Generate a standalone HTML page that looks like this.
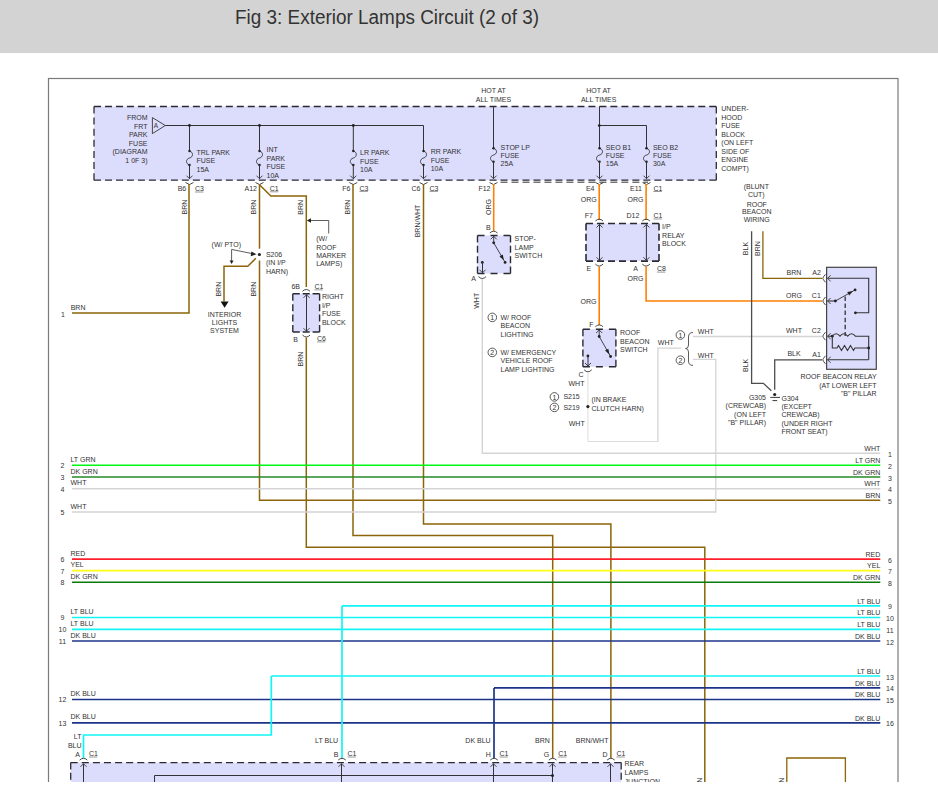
<!DOCTYPE html><html><head><meta charset="utf-8"><style>html,body{margin:0;padding:0;background:#fff;width:938px;height:791px;overflow:hidden}svg{display:block;font-family:"Liberation Sans",sans-serif}</style></head><body>
<svg width="938" height="791" viewBox="0 0 938 791">
<rect x="0" y="0" width="938" height="791" fill="#fff"/>
<rect x="0" y="0" width="938" height="53" fill="#d3d3d3"/>
<text x="235" y="23.9" font-size="19.5" fill="#333" textLength="304" lengthAdjust="spacingAndGlyphs">Fig 3: Exterior Lamps Circuit (2 of 3)</text>
<rect x="48.5" y="78.5" width="849.5" height="760" fill="none" stroke="#7a7a7a" stroke-width="1.2"/>
<rect x="94" y="106.5" width="622.3" height="73.69999999999999" fill="#dcdcfc"/>
<line x1="94" y1="106.5" x2="716.3" y2="106.5" stroke="#2a2a33" stroke-width="1.3" stroke-dasharray="7.0 3.987"/>
<line x1="94" y1="106.5" x2="94" y2="180.2" stroke="#2a2a33" stroke-width="1.3" stroke-dasharray="7.0 4.117"/>
<line x1="716.3" y1="106.5" x2="716.3" y2="180.2" stroke="#2a2a33" stroke-width="1.3" stroke-dasharray="7.0 4.117"/>
<line x1="94" y1="180.2" x2="716.3" y2="180.2" stroke="#2a2a33" stroke-width="1.3" stroke-dasharray="7.0 3.987"/>
<clipPath id="dbl"><rect x="498" y="175" width="150" height="12"/></clipPath>
<line x1="94" y1="182.2" x2="716.3" y2="182.2" stroke="#333333" stroke-width="1.0" stroke-dasharray="7 3.987" clip-path="url(#dbl)"/>
<path d="M152.4,117.6 L165.3,125.5 L152.4,133.6 Z" fill="#dcdcfc" stroke="#333333" stroke-width="0.9"/>
<text x="156" y="128.02" text-anchor="middle" font-size="6.5" fill="#333333" >A</text>
<text x="147.5" y="120.10" text-anchor="end" font-size="7" fill="#333333" >FROM</text>
<text x="147.5" y="128.70" text-anchor="end" font-size="7" fill="#333333" >FRT</text>
<text x="147.5" y="137.10" text-anchor="end" font-size="7" fill="#333333" >PARK</text>
<text x="147.5" y="145.90" text-anchor="end" font-size="7" fill="#333333" >FUSE</text>
<text x="147.5" y="154.40" text-anchor="end" font-size="7" fill="#333333" >(DIAGRAM</text>
<text x="147.5" y="163.00" text-anchor="end" font-size="7" fill="#333333" >1 0F 3)</text>
<polyline points="165.3,125.5 423.5,125.5 423.5,151" fill="none" stroke="#333333" stroke-width="1.0" stroke-linejoin="miter"/>
<polyline points="189.5,125.5 189.5,151" fill="none" stroke="#333333" stroke-width="1.0" stroke-linejoin="miter"/>
<circle cx="189.5" cy="125.5" r="1.4" fill="#222"/>
<polyline points="259.5,125.5 259.5,151" fill="none" stroke="#333333" stroke-width="1.0" stroke-linejoin="miter"/>
<circle cx="259.5" cy="125.5" r="1.4" fill="#222"/>
<polyline points="353.3,125.5 353.3,151" fill="none" stroke="#333333" stroke-width="1.0" stroke-linejoin="miter"/>
<circle cx="353.3" cy="125.5" r="1.4" fill="#222"/>
<path d="M189.5,151 C193.5,152 193.5,157.0 189.5,158.0 C185.5,159.0 185.5,164 189.5,165" fill="none" stroke="#333333" stroke-width="0.9"/>
<circle cx="189.5" cy="151" r="1.25" fill="#222"/>
<circle cx="189.5" cy="165" r="1.25" fill="#222"/>
<polyline points="189.5,165 189.5,178.7" fill="none" stroke="#333333" stroke-width="1.0" stroke-linejoin="miter"/>
<path d="M186.5,175.7 L189.5,178.7 L192.5,175.7" fill="none" stroke="#333333" stroke-width="0.9"/>
<path d="M185.5,182.5 L189.5,184.5 L193.5,182.5" fill="none" stroke="#333333" stroke-width="0.9"/>
<path d="M259.5,151 C263.5,152 263.5,157.0 259.5,158.0 C255.5,159.0 255.5,164 259.5,165" fill="none" stroke="#333333" stroke-width="0.9"/>
<circle cx="259.5" cy="151" r="1.25" fill="#222"/>
<circle cx="259.5" cy="165" r="1.25" fill="#222"/>
<polyline points="259.5,165 259.5,178.7" fill="none" stroke="#333333" stroke-width="1.0" stroke-linejoin="miter"/>
<path d="M256.5,175.7 L259.5,178.7 L262.5,175.7" fill="none" stroke="#333333" stroke-width="0.9"/>
<path d="M255.5,182.5 L259.5,184.5 L263.5,182.5" fill="none" stroke="#333333" stroke-width="0.9"/>
<path d="M353.3,151 C357.3,152 357.3,157.0 353.3,158.0 C349.3,159.0 349.3,164 353.3,165" fill="none" stroke="#333333" stroke-width="0.9"/>
<circle cx="353.3" cy="151" r="1.25" fill="#222"/>
<circle cx="353.3" cy="165" r="1.25" fill="#222"/>
<polyline points="353.3,165 353.3,178.7" fill="none" stroke="#333333" stroke-width="1.0" stroke-linejoin="miter"/>
<path d="M350.3,175.7 L353.3,178.7 L356.3,175.7" fill="none" stroke="#333333" stroke-width="0.9"/>
<path d="M349.3,182.5 L353.3,184.5 L357.3,182.5" fill="none" stroke="#333333" stroke-width="0.9"/>
<path d="M423.5,151 C427.5,152 427.5,157.0 423.5,158.0 C419.5,159.0 419.5,164 423.5,165" fill="none" stroke="#333333" stroke-width="0.9"/>
<circle cx="423.5" cy="151" r="1.25" fill="#222"/>
<circle cx="423.5" cy="165" r="1.25" fill="#222"/>
<polyline points="423.5,165 423.5,178.7" fill="none" stroke="#333333" stroke-width="1.0" stroke-linejoin="miter"/>
<path d="M420.5,175.7 L423.5,178.7 L426.5,175.7" fill="none" stroke="#333333" stroke-width="0.9"/>
<path d="M419.5,182.5 L423.5,184.5 L427.5,182.5" fill="none" stroke="#333333" stroke-width="0.9"/>
<text x="196.5" y="154.50" text-anchor="start" font-size="7" fill="#333333" >TRL PARK</text>
<text x="196.5" y="163.00" text-anchor="start" font-size="7" fill="#333333" >FUSE</text>
<text x="196.5" y="171.50" text-anchor="start" font-size="7" fill="#333333" >15A</text>
<text x="266.5" y="152.20" text-anchor="start" font-size="7" fill="#333333" >INT</text>
<text x="266.5" y="160.80" text-anchor="start" font-size="7" fill="#333333" >PARK</text>
<text x="266.5" y="169.30" text-anchor="start" font-size="7" fill="#333333" >FUSE</text>
<text x="266.5" y="178.00" text-anchor="start" font-size="7" fill="#333333" >10A</text>
<text x="360" y="155.30" text-anchor="start" font-size="7" fill="#333333" >LR PARK</text>
<text x="360" y="163.70" text-anchor="start" font-size="7" fill="#333333" >FUSE</text>
<text x="360" y="172.10" text-anchor="start" font-size="7" fill="#333333" >10A</text>
<text x="430.7" y="154.00" text-anchor="start" font-size="7" fill="#333333" >RR PARK</text>
<text x="430.7" y="162.50" text-anchor="start" font-size="7" fill="#333333" >FUSE</text>
<text x="430.7" y="171.10" text-anchor="start" font-size="7" fill="#333333" >10A</text>
<text x="493.5" y="93.20" text-anchor="middle" font-size="7" fill="#333333" >HOT AT</text>
<text x="493.5" y="102.10" text-anchor="middle" font-size="7" fill="#333333" >ALL TIMES</text>
<text x="598.6" y="93.20" text-anchor="middle" font-size="7" fill="#333333" >HOT AT</text>
<text x="598.6" y="102.10" text-anchor="middle" font-size="7" fill="#333333" >ALL TIMES</text>
<polyline points="493.5,106.5 493.5,148.3" fill="none" stroke="#333333" stroke-width="1.0" stroke-linejoin="miter"/>
<path d="M493.5,148.3 C497.5,149.3 497.5,154.05 493.5,155.05 C489.5,156.05 489.5,160.8 493.5,161.8" fill="none" stroke="#333333" stroke-width="0.9"/>
<circle cx="493.5" cy="148.3" r="1.25" fill="#222"/>
<circle cx="493.5" cy="161.8" r="1.25" fill="#222"/>
<polyline points="493.5,161.8 493.5,178.7" fill="none" stroke="#333333" stroke-width="1.0" stroke-linejoin="miter"/>
<path d="M490.5,175.7 L493.5,178.7 L496.5,175.7" fill="none" stroke="#333333" stroke-width="0.9"/>
<path d="M489.5,182.5 L493.5,184.5 L497.5,182.5" fill="none" stroke="#333333" stroke-width="0.9"/>
<polyline points="599.5,106.5 599.5,148.3" fill="none" stroke="#333333" stroke-width="1.0" stroke-linejoin="miter"/>
<polyline points="599.5,125.5 646.5,125.5 646.5,148.3" fill="none" stroke="#333333" stroke-width="1.0" stroke-linejoin="miter"/>
<circle cx="599.3" cy="125.6" r="1.4" fill="#222"/>
<path d="M599.5,148.3 C603.5,149.3 603.5,154.05 599.5,155.05 C595.5,156.05 595.5,160.8 599.5,161.8" fill="none" stroke="#333333" stroke-width="0.9"/>
<circle cx="599.5" cy="148.3" r="1.25" fill="#222"/>
<circle cx="599.5" cy="161.8" r="1.25" fill="#222"/>
<polyline points="599.5,161.8 599.5,178.7" fill="none" stroke="#333333" stroke-width="1.0" stroke-linejoin="miter"/>
<path d="M596.5,175.7 L599.5,178.7 L602.5,175.7" fill="none" stroke="#333333" stroke-width="0.9"/>
<path d="M595.5,182.5 L599.5,184.5 L603.5,182.5" fill="none" stroke="#333333" stroke-width="0.9"/>
<path d="M646.5,148.3 C650.5,149.3 650.5,154.05 646.5,155.05 C642.5,156.05 642.5,160.8 646.5,161.8" fill="none" stroke="#333333" stroke-width="0.9"/>
<circle cx="646.5" cy="148.3" r="1.25" fill="#222"/>
<circle cx="646.5" cy="161.8" r="1.25" fill="#222"/>
<polyline points="646.5,161.8 646.5,178.7" fill="none" stroke="#333333" stroke-width="1.0" stroke-linejoin="miter"/>
<path d="M643.5,175.7 L646.5,178.7 L649.5,175.7" fill="none" stroke="#333333" stroke-width="0.9"/>
<path d="M642.5,182.5 L646.5,184.5 L650.5,182.5" fill="none" stroke="#333333" stroke-width="0.9"/>
<text x="500.6" y="149.50" text-anchor="start" font-size="7" fill="#333333" >STOP LP</text>
<text x="500.6" y="157.50" text-anchor="start" font-size="7" fill="#333333" >FUSE</text>
<text x="500.6" y="166.10" text-anchor="start" font-size="7" fill="#333333" >25A</text>
<text x="605.8" y="149.50" text-anchor="start" font-size="7" fill="#333333" >SEO B1</text>
<text x="605.8" y="157.50" text-anchor="start" font-size="7" fill="#333333" >FUSE</text>
<text x="605.8" y="166.10" text-anchor="start" font-size="7" fill="#333333" >15A</text>
<text x="652.9" y="149.50" text-anchor="start" font-size="7" fill="#333333" >SEO B2</text>
<text x="652.9" y="157.50" text-anchor="start" font-size="7" fill="#333333" >FUSE</text>
<text x="652.9" y="166.10" text-anchor="start" font-size="7" fill="#333333" >30A</text>
<text x="721.3" y="111.40" text-anchor="start" font-size="7" fill="#333333" >UNDER-</text>
<text x="721.3" y="119.80" text-anchor="start" font-size="7" fill="#333333" >HOOD</text>
<text x="721.3" y="128.20" text-anchor="start" font-size="7" fill="#333333" >FUSE</text>
<text x="721.3" y="136.60" text-anchor="start" font-size="7" fill="#333333" >BLOCK</text>
<text x="721.3" y="145.00" text-anchor="start" font-size="7" fill="#333333" >(ON LEFT</text>
<text x="721.3" y="153.70" text-anchor="start" font-size="7" fill="#333333" >SIDE OF</text>
<text x="721.3" y="162.20" text-anchor="start" font-size="7" fill="#333333" >ENGINE</text>
<text x="721.3" y="170.80" text-anchor="start" font-size="7" fill="#333333" >COMPT)</text>
<text x="186.2" y="191.10" text-anchor="end" font-size="7" fill="#333333" >B6</text>
<text x="195" y="191.10" text-anchor="start" font-size="7" fill="#333333" >C3</text>
<line x1="195" y1="192.00" x2="203.40" y2="192.00" stroke="#555" stroke-width="0.6"/>
<text x="257" y="191.10" text-anchor="end" font-size="7" fill="#333333" >A12</text>
<text x="269.8" y="190.90" text-anchor="start" font-size="7" fill="#333333" >C1</text>
<line x1="269.8" y1="191.80" x2="278.20" y2="191.80" stroke="#555" stroke-width="0.6"/>
<text x="350.5" y="191.10" text-anchor="end" font-size="7" fill="#333333" >F6</text>
<text x="359.4" y="190.50" text-anchor="start" font-size="7" fill="#333333" >C3</text>
<line x1="359.4" y1="191.40" x2="367.80" y2="191.40" stroke="#555" stroke-width="0.6"/>
<text x="420.5" y="191.10" text-anchor="end" font-size="7" fill="#333333" >C6</text>
<text x="429.5" y="190.50" text-anchor="start" font-size="7" fill="#333333" >C3</text>
<line x1="429.5" y1="191.40" x2="437.90" y2="191.40" stroke="#555" stroke-width="0.6"/>
<text x="490.5" y="191.10" text-anchor="end" font-size="7" fill="#333333" >F12</text>
<text x="590.2" y="190.60" text-anchor="middle" font-size="7" fill="#333333" >E4</text>
<text x="636" y="190.60" text-anchor="middle" font-size="7" fill="#333333" >E11</text>
<text x="653.4" y="190.60" text-anchor="start" font-size="7" fill="#333333" >C1</text>
<line x1="653.4" y1="191.50" x2="661.80" y2="191.50" stroke="#555" stroke-width="0.6"/>
<text x="588.8" y="202.00" text-anchor="middle" font-size="7" fill="#333333" >ORG</text>
<text x="635.6" y="202.00" text-anchor="middle" font-size="7" fill="#333333" >ORG</text>
<polyline points="189,184 189,313 72,313" fill="none" stroke="#8b6508" stroke-width="1.5" stroke-linejoin="miter"/>
<text x="186.50" y="207" text-anchor="middle" font-size="7" fill="#333333" transform="rotate(-90 186.50 207)">BRN</text>
<text x="70.7" y="310.20" text-anchor="start" font-size="7" fill="#333333" >BRN</text>
<text x="63" y="316.50" text-anchor="middle" font-size="7" fill="#333333" >1</text>
<polyline points="259.5,184 259.5,248.7" fill="none" stroke="#8b6508" stroke-width="1.5" stroke-linejoin="miter"/>
<polyline points="259.5,260.4 259.5,500.3 880.3,500.3" fill="none" stroke="#8b6508" stroke-width="1.5" stroke-linejoin="miter"/>
<polyline points="259.5,184.7 270.9,196 306.3,196 306.3,287" fill="none" stroke="#8b6508" stroke-width="1.5" stroke-linejoin="miter"/>
<text x="256.30" y="207" text-anchor="middle" font-size="7" fill="#333333" transform="rotate(-90 256.30 207)">BRN</text>
<text x="302.80" y="207.3" text-anchor="middle" font-size="7" fill="#333333" transform="rotate(-90 302.80 207.3)">BRN</text>
<circle cx="259.4" cy="254.5" r="1.6" fill="#222"/>
<polyline points="255.8,258.3 247.8,266.2 224,266.2 224,301.5" fill="none" stroke="#8b6508" stroke-width="1.5" stroke-linejoin="miter"/>
<path d="M220.6,301.4 L228.6,301.4 L224.6,307.8 Z" fill="#111"/>
<polyline points="253.5,253.9 231.6,249.4 231.6,261" fill="none" stroke="#333333" stroke-width="0.8"/>
<path d="M256.5,254.3 L251.4,251.6 L250.7,256.2 Z" fill="#222"/>
<path d="M229.6,260.5 L233.6,260.5 L231.6,264 Z" fill="#222"/>
<text x="226.3" y="247.40" text-anchor="middle" font-size="7" fill="#333333" >(W/ PTO)</text>
<text x="265.9" y="257.20" text-anchor="start" font-size="7" fill="#333333" >S206</text>
<text x="265.9" y="265.40" text-anchor="start" font-size="7" fill="#333333" >(IN I/P</text>
<text x="265.9" y="273.90" text-anchor="start" font-size="7" fill="#333333" >HARN)</text>
<text x="221.00" y="289.2" text-anchor="middle" font-size="7" fill="#333333" transform="rotate(-90 221.00 289.2)">BRN</text>
<text x="256.10" y="289.2" text-anchor="middle" font-size="7" fill="#333333" transform="rotate(-90 256.10 289.2)">BRN</text>
<text x="224.5" y="317.10" text-anchor="middle" font-size="7" fill="#333333" >INTERIOR</text>
<text x="224.5" y="325.10" text-anchor="middle" font-size="7" fill="#333333" >LIGHTS</text>
<text x="224.5" y="333.10" text-anchor="middle" font-size="7" fill="#333333" >SYSTEM</text>
<polyline points="309,220.5 328.7,220.5 328.7,233.5" fill="none" stroke="#333333" stroke-width="0.8"/>
<path d="M306.8,220.5 L311,218.3 L311,222.7 Z" fill="#222"/>
<text x="316.2" y="241.20" text-anchor="start" font-size="7" fill="#333333" >(W/</text>
<text x="316.2" y="249.60" text-anchor="start" font-size="7" fill="#333333" >ROOF</text>
<text x="316.2" y="258.00" text-anchor="start" font-size="7" fill="#333333" >MARKER</text>
<text x="316.2" y="266.10" text-anchor="start" font-size="7" fill="#333333" >LAMPS)</text>
<path d="M302.5,291.3 Q306.3,287.7 310.1,291.3" fill="none" stroke="#333333" stroke-width="0.9"/>
<rect x="292.8" y="293.8" width="26.80000000000001" height="38.19999999999999" fill="#dcdcfc"/>
<line x1="292.8" y1="293.8" x2="319.6" y2="293.8" stroke="#2a2a33" stroke-width="1.4" stroke-dasharray="7.0 2.900"/>
<line x1="292.8" y1="293.8" x2="292.8" y2="332" stroke="#2a2a33" stroke-width="1.4" stroke-dasharray="7.0 3.400"/>
<line x1="319.6" y1="293.8" x2="319.6" y2="332" stroke="#2a2a33" stroke-width="1.4" stroke-dasharray="7.0 3.400"/>
<line x1="292.8" y1="332" x2="319.6" y2="332" stroke="#2a2a33" stroke-width="1.4" stroke-dasharray="7.0 2.900"/>
<polyline points="306.5,294.5 306.5,331.5" fill="none" stroke="#333333" stroke-width="1.0" stroke-linejoin="miter"/>
<path d="M303.5,297.8 L306.5,294.8 L309.5,297.8" fill="none" stroke="#333333" stroke-width="0.9"/>
<path d="M303.5,328.2 L306.5,331.2 L309.5,328.2" fill="none" stroke="#333333" stroke-width="0.9"/>
<path d="M302.5,335 Q306.3,339 310.1,335" fill="none" stroke="#333333" stroke-width="0.9"/>
<text x="300" y="289.00" text-anchor="end" font-size="7" fill="#333333" >6B</text>
<text x="314.4" y="289.00" text-anchor="start" font-size="7" fill="#333333" >C1</text>
<line x1="314.4" y1="289.90" x2="322.80" y2="289.90" stroke="#555" stroke-width="0.6"/>
<text x="298" y="341.80" text-anchor="end" font-size="7" fill="#333333" >B</text>
<text x="317" y="341.00" text-anchor="start" font-size="7" fill="#333333" >C6</text>
<line x1="317" y1="341.90" x2="325.40" y2="341.90" stroke="#555" stroke-width="0.6"/>
<text x="321.9" y="299.00" text-anchor="start" font-size="7" fill="#333333" >RIGHT</text>
<text x="321.9" y="307.60" text-anchor="start" font-size="7" fill="#333333" >I/P</text>
<text x="321.9" y="316.30" text-anchor="start" font-size="7" fill="#333333" >FUSE</text>
<text x="321.9" y="324.90" text-anchor="start" font-size="7" fill="#333333" >BLOCK</text>
<polyline points="306.3,337.5 306.3,547.3 704.8,547.3 704.8,782" fill="none" stroke="#8b6508" stroke-width="1.5" stroke-linejoin="miter"/>
<text x="302.80" y="359" text-anchor="middle" font-size="7" fill="#333333" transform="rotate(-90 302.80 359)">BRN</text>
<polyline points="353,184 353,535.5 552.7,535.5 552.7,758" fill="none" stroke="#8b6508" stroke-width="1.5" stroke-linejoin="miter"/>
<text x="350.00" y="207" text-anchor="middle" font-size="7" fill="#333333" transform="rotate(-90 350.00 207)">BRN</text>
<polyline points="423.5,184 423.5,524 610.9,524 610.9,758" fill="none" stroke="#8b6508" stroke-width="1.5" stroke-linejoin="miter"/>
<text x="419.90" y="221" text-anchor="middle" font-size="7" fill="#333333" transform="rotate(-90 419.90 221)">BRN/WHT</text>
<polyline points="493.7,184 493.7,231" fill="none" stroke="#ff8000" stroke-width="1.6" stroke-linejoin="miter"/>
<text x="491.00" y="207" text-anchor="middle" font-size="7" fill="#333333" transform="rotate(-90 491.00 207)">ORG</text>
<text x="488.4" y="230.00" text-anchor="middle" font-size="7" fill="#333333" >B</text>
<path d="M489.9,233.0 Q493.7,229.4 497.5,233.0" fill="none" stroke="#333333" stroke-width="0.9"/>
<rect x="477.5" y="235.5" width="33.0" height="38.0" fill="#dcdcfc"/>
<line x1="477.5" y1="235.5" x2="510.5" y2="235.5" stroke="#2a2a33" stroke-width="1.4" stroke-dasharray="7.0 6.000"/>
<line x1="477.5" y1="235.5" x2="477.5" y2="273.5" stroke="#2a2a33" stroke-width="1.4" stroke-dasharray="7.0 3.333"/>
<line x1="510.5" y1="235.5" x2="510.5" y2="273.5" stroke="#2a2a33" stroke-width="1.4" stroke-dasharray="7.0 3.333"/>
<line x1="477.5" y1="273.5" x2="510.5" y2="273.5" stroke="#2a2a33" stroke-width="1.4" stroke-dasharray="7.0 6.000"/>
<polyline points="493.7,236 493.7,242.8" fill="none" stroke="#333333" stroke-width="0.9" stroke-linejoin="miter"/>
<path d="M490.7,239.3 L493.7,236.3 L496.7,239.3" fill="none" stroke="#333333" stroke-width="0.9"/>
<line x1="493.7" y1="242.8" x2="505.1" y2="262.4" stroke="#333333" stroke-width="0.9"/>
<path d="M503.89,260.33 L499.49,256.53 L502.77,254.62 Z" fill="#222"/>
<circle cx="493.7" cy="242.8" r="1.4" fill="#222"/>
<circle cx="505.1" cy="262.4" r="1.4" fill="#222"/>
<circle cx="482.3" cy="262.4" r="1.4" fill="#222"/>
<polyline points="482.5,262.1 482.5,273" fill="none" stroke="#333333" stroke-width="1.0" stroke-linejoin="miter"/>
<path d="M479.5,269.8 L482.5,272.8 L485.5,269.8" fill="none" stroke="#333333" stroke-width="0.9"/>
<path d="M478.5,276.5 Q482.3,280.5 486.1,276.5" fill="none" stroke="#333333" stroke-width="0.9"/>
<text x="473.6" y="281.20" text-anchor="middle" font-size="7" fill="#333333" >A</text>
<text x="514.6" y="240.70" text-anchor="start" font-size="7" fill="#333333" >STOP-</text>
<text x="514.6" y="249.80" text-anchor="start" font-size="7" fill="#333333" >LAMP</text>
<text x="514.6" y="258.00" text-anchor="start" font-size="7" fill="#333333" >SWITCH</text>
<polyline points="482.3,279 482.3,453.3 880.3,453.3" fill="none" stroke="#d4d4d4" stroke-width="1.4" stroke-linejoin="miter"/>
<text x="478.90" y="300.8" text-anchor="middle" font-size="7" fill="#333333" transform="rotate(-90 478.90 300.8)">WHT</text>
<circle cx="492.3" cy="317.4" r="4.3" fill="none" stroke="#333333" stroke-width="0.8"/>
<text x="492.3" y="320.10" text-anchor="middle" font-size="7" fill="#333333" >1</text>
<text x="500.5" y="319.90" text-anchor="start" font-size="7" fill="#333333" >W/ ROOF</text>
<text x="500.5" y="328.30" text-anchor="start" font-size="7" fill="#333333" >BEACON</text>
<text x="500.5" y="336.70" text-anchor="start" font-size="7" fill="#333333" >LIGHTING</text>
<circle cx="492.3" cy="352.4" r="4.3" fill="none" stroke="#333333" stroke-width="0.8"/>
<text x="492.3" y="355.10" text-anchor="middle" font-size="7" fill="#333333" >2</text>
<text x="500.5" y="354.90" text-anchor="start" font-size="7" fill="#333333" >W/ EMERGENCY</text>
<text x="500.5" y="363.30" text-anchor="start" font-size="7" fill="#333333" >VEHICLE ROOF</text>
<text x="500.5" y="371.90" text-anchor="start" font-size="7" fill="#333333" >LAMP LIGHTING</text>
<text x="588.8" y="218.10" text-anchor="middle" font-size="7" fill="#333333" >F7</text>
<text x="632.9" y="218.10" text-anchor="middle" font-size="7" fill="#333333" >D12</text>
<text x="653.4" y="218.10" text-anchor="start" font-size="7" fill="#333333" >C1</text>
<line x1="653.4" y1="219.00" x2="661.80" y2="219.00" stroke="#555" stroke-width="0.6"/>
<polyline points="599.2,184 599.2,220" fill="none" stroke="#ff8000" stroke-width="1.6" stroke-linejoin="miter"/>
<path d="M595.4000000000001,221.0 Q599.2,217.4 603.0,221.0" fill="none" stroke="#333333" stroke-width="0.9"/>
<polyline points="646.1,184 646.1,220" fill="none" stroke="#ff8000" stroke-width="1.6" stroke-linejoin="miter"/>
<path d="M642.3000000000001,221.0 Q646.1,217.4 649.9,221.0" fill="none" stroke="#333333" stroke-width="0.9"/>
<rect x="586" y="223.5" width="73" height="37.60000000000002" fill="#dcdcfc"/>
<line x1="586" y1="223.5" x2="659" y2="223.5" stroke="#2a2a33" stroke-width="1.6" stroke-dasharray="7.0 4.000"/>
<line x1="586" y1="223.5" x2="586" y2="261.1" stroke="#2a2a33" stroke-width="1.6" stroke-dasharray="7.0 3.200"/>
<line x1="659" y1="223.5" x2="659" y2="261.1" stroke="#2a2a33" stroke-width="1.6" stroke-dasharray="7.0 3.200"/>
<line x1="586" y1="261.1" x2="659" y2="261.1" stroke="#2a2a33" stroke-width="1.6" stroke-dasharray="7.0 4.000"/>
<polyline points="599.5,224.3 599.5,260.5" fill="none" stroke="#333333" stroke-width="1.0" stroke-linejoin="miter"/>
<path d="M596.5,227.5 L599.5,224.5 L602.5,227.5" fill="none" stroke="#333333" stroke-width="0.9"/>
<path d="M596.5,257.3 L599.5,260.3 L602.5,257.3" fill="none" stroke="#333333" stroke-width="0.9"/>
<path d="M595.4000000000001,264.1 Q599.2,268.1 603.0,264.1" fill="none" stroke="#333333" stroke-width="0.9"/>
<polyline points="646.4,224.3 646.4,260.5" fill="none" stroke="#333333" stroke-width="1.0" stroke-linejoin="miter"/>
<path d="M643.4,227.5 L646.4,224.5 L649.4,227.5" fill="none" stroke="#333333" stroke-width="0.9"/>
<path d="M643.4,257.3 L646.4,260.3 L649.4,257.3" fill="none" stroke="#333333" stroke-width="0.9"/>
<path d="M642.3000000000001,264.1 Q646.1,268.1 649.9,264.1" fill="none" stroke="#333333" stroke-width="0.9"/>
<text x="662.1" y="229.00" text-anchor="start" font-size="7" fill="#333333" >I/P</text>
<text x="662.1" y="237.90" text-anchor="start" font-size="7" fill="#333333" >RELAY</text>
<text x="662.1" y="246.20" text-anchor="start" font-size="7" fill="#333333" >BLOCK</text>
<text x="588.8" y="271.20" text-anchor="middle" font-size="7" fill="#333333" >E</text>
<text x="635.6" y="271.20" text-anchor="middle" font-size="7" fill="#333333" >A</text>
<text x="657" y="271.20" text-anchor="start" font-size="7" fill="#333333" >C8</text>
<line x1="657" y1="272.10" x2="665.40" y2="272.10" stroke="#555" stroke-width="0.6"/>
<text x="635.6" y="280.50" text-anchor="middle" font-size="7" fill="#333333" >ORG</text>
<polyline points="599.2,266.5 599.2,325" fill="none" stroke="#ff8000" stroke-width="1.6" stroke-linejoin="miter"/>
<text x="588.6" y="303.70" text-anchor="middle" font-size="7" fill="#333333" >ORG</text>
<polyline points="646.1,266.5 646.1,301 822,301" fill="none" stroke="#ff8000" stroke-width="1.6" stroke-linejoin="miter"/>
<text x="591.5" y="327.20" text-anchor="middle" font-size="7" fill="#333333" >F</text>
<path d="M595.4000000000001,326.7 Q599.2,323.09999999999997 603.0,326.7" fill="none" stroke="#333333" stroke-width="0.9"/>
<rect x="582.9" y="329.2" width="33.0" height="37.60000000000002" fill="#dcdcfc"/>
<line x1="582.9" y1="329.2" x2="615.9" y2="329.2" stroke="#2a2a33" stroke-width="1.4" stroke-dasharray="7.0 6.000"/>
<line x1="582.9" y1="329.2" x2="582.9" y2="366.8" stroke="#2a2a33" stroke-width="1.4" stroke-dasharray="7.0 3.200"/>
<line x1="615.9" y1="329.2" x2="615.9" y2="366.8" stroke="#2a2a33" stroke-width="1.4" stroke-dasharray="7.0 3.200"/>
<line x1="582.9" y1="366.8" x2="615.9" y2="366.8" stroke="#2a2a33" stroke-width="1.4" stroke-dasharray="7.0 6.000"/>
<polyline points="599.2,329.8 599.2,336.5" fill="none" stroke="#333333" stroke-width="0.9" stroke-linejoin="miter"/>
<path d="M596.2,333 L599.2,330 L602.2,333" fill="none" stroke="#333333" stroke-width="0.9"/>
<line x1="599.2" y1="336.5" x2="610.6" y2="356.5" stroke="#333333" stroke-width="0.9"/>
<path d="M609.41,354.41 L605.04,350.58 L608.34,348.70 Z" fill="#222"/>
<circle cx="599.2" cy="336.5" r="1.4" fill="#222"/>
<circle cx="610.6" cy="356.5" r="1.4" fill="#222"/>
<circle cx="587.9" cy="356" r="1.4" fill="#222"/>
<polyline points="588,356 588,366.3" fill="none" stroke="#333333" stroke-width="1.0" stroke-linejoin="miter"/>
<path d="M585,363 L588,366 L591,363" fill="none" stroke="#333333" stroke-width="0.9"/>
<path d="M584.1,369.8 Q587.9,373.8 591.6999999999999,369.8" fill="none" stroke="#333333" stroke-width="0.9"/>
<text x="620" y="335.10" text-anchor="start" font-size="7" fill="#333333" >ROOF</text>
<text x="620" y="344.20" text-anchor="start" font-size="7" fill="#333333" >BEACON</text>
<text x="620" y="352.40" text-anchor="start" font-size="7" fill="#333333" >SWITCH</text>
<text x="581" y="377.20" text-anchor="middle" font-size="7" fill="#333333" >C</text>
<text x="576.5" y="385.90" text-anchor="middle" font-size="7" fill="#333333" >WHT</text>
<polyline points="587.9,372 587.9,441.5 657.9,441.5" fill="none" stroke="#dcdcdc" stroke-width="1.0" stroke-linejoin="miter"/>
<polyline points="657.9,441.5 657.9,348.2 681,348.2" fill="none" stroke="#d4d4d4" stroke-width="1.3" stroke-linejoin="miter"/>
<circle cx="587.9" cy="406.6" r="1.6" fill="#222"/>
<circle cx="554.4" cy="396.9" r="4.3" fill="none" stroke="#333333" stroke-width="0.8"/>
<text x="554.4" y="399.60" text-anchor="middle" font-size="7" fill="#333333" >1</text>
<text x="563.4" y="399.40" text-anchor="start" font-size="7" fill="#333333" >S215</text>
<circle cx="554.4" cy="407.4" r="4.3" fill="none" stroke="#333333" stroke-width="0.8"/>
<text x="554.4" y="410.10" text-anchor="middle" font-size="7" fill="#333333" >2</text>
<text x="563.4" y="409.90" text-anchor="start" font-size="7" fill="#333333" >S219</text>
<text x="591.4" y="402.20" text-anchor="start" font-size="7" fill="#333333" >(IN BRAKE</text>
<text x="591.4" y="411.30" text-anchor="start" font-size="7" fill="#333333" >CLUTCH HARN)</text>
<text x="576.7" y="425.70" text-anchor="middle" font-size="7" fill="#333333" >WHT</text>
<text x="665.8" y="344.50" text-anchor="middle" font-size="7" fill="#333333" >WHT</text>
<path d="M693,332.5 Q688.5,332.5 688.5,337 L688.5,345 Q688.5,348.5 685.5,348.5 Q688.5,348.5 688.5,352 L688.5,361 Q688.5,365.4 693,365.4" fill="none" stroke="#333333" stroke-width="0.8"/>
<circle cx="680.4" cy="335" r="4.3" fill="none" stroke="#333333" stroke-width="0.8"/>
<text x="680.4" y="337.70" text-anchor="middle" font-size="7" fill="#333333" >1</text>
<circle cx="680.4" cy="360.2" r="4.3" fill="none" stroke="#333333" stroke-width="0.8"/>
<text x="680.4" y="362.90" text-anchor="middle" font-size="7" fill="#333333" >2</text>
<polyline points="693,336.5 822,336.5" fill="none" stroke="#d4d4d4" stroke-width="1.3" stroke-linejoin="miter"/>
<text x="705.8" y="333.90" text-anchor="middle" font-size="7" fill="#333333" >WHT</text>
<polyline points="693,359.3 715.8,359.3 715.8,512 72,512" fill="none" stroke="#d4d4d4" stroke-width="1.3" stroke-linejoin="miter"/>
<text x="705.8" y="357.80" text-anchor="middle" font-size="7" fill="#333333" >WHT</text>
<text x="756.3" y="189.40" text-anchor="middle" font-size="7" fill="#333333" >(BLUNT</text>
<text x="756.3" y="197.40" text-anchor="middle" font-size="7" fill="#333333" >CUT)</text>
<text x="756.8" y="206.80" text-anchor="middle" font-size="7" fill="#333333" >ROOF</text>
<text x="756.8" y="214.40" text-anchor="middle" font-size="7" fill="#333333" >BEACON</text>
<text x="756.8" y="222.10" text-anchor="middle" font-size="7" fill="#333333" >WIRING</text>
<polyline points="751.6,231.2 751.6,383.3 763.4,383.3 771.3,390.7" fill="none" stroke="#4d4d4d" stroke-width="1.3" stroke-linejoin="miter"/>
<polyline points="762.9,231.2 762.9,278.3 822,278.3" fill="none" stroke="#8b6508" stroke-width="1.3" stroke-linejoin="miter"/>
<text x="747.80" y="248.5" text-anchor="middle" font-size="7" fill="#333333" transform="rotate(-90 747.80 248.5)">BLK</text>
<text x="759.90" y="248.5" text-anchor="middle" font-size="7" fill="#333333" transform="rotate(-90 759.90 248.5)">BRN</text>
<text x="747.80" y="365.4" text-anchor="middle" font-size="7" fill="#333333" transform="rotate(-90 747.80 365.4)">BLK</text>
<polyline points="822,359.8 774.7,359.8 774.7,389.7" fill="none" stroke="#4d4d4d" stroke-width="1.3" stroke-linejoin="miter"/>
<circle cx="774.7" cy="394.5" r="1.6" fill="#222"/>
<polyline points="770.3,397.4 780,397.4" fill="none" stroke="#222" stroke-width="0.9" stroke-linejoin="miter"/>
<polyline points="772.5,400.6 777.2,400.6" fill="none" stroke="#222" stroke-width="0.9" stroke-linejoin="miter"/>
<text x="766" y="400.20" text-anchor="end" font-size="7" fill="#333333" >G305</text>
<text x="766" y="408.10" text-anchor="end" font-size="7" fill="#333333" >(CREWCAB)</text>
<text x="766" y="417.10" text-anchor="end" font-size="7" fill="#333333" >(ON LEFT</text>
<text x="766" y="425.20" text-anchor="end" font-size="7" fill="#333333" >"B" PILLAR)</text>
<text x="781.5" y="400.90" text-anchor="start" font-size="7" fill="#333333" >G304</text>
<text x="781.5" y="409.10" text-anchor="start" font-size="7" fill="#333333" >(EXCEPT</text>
<text x="781.5" y="417.30" text-anchor="start" font-size="7" fill="#333333" >CREWCAB)</text>
<text x="781.5" y="425.70" text-anchor="start" font-size="7" fill="#333333" >(UNDER RIGHT</text>
<text x="781.5" y="433.80" text-anchor="start" font-size="7" fill="#333333" >FRONT SEAT)</text>
<rect x="826.6" y="267.3" width="49.7" height="102" fill="#dcdcfc" stroke="#444" stroke-width="1.2"/>
<path d="M825.5,274.3 Q822.8,277.3 822.8,278.3 Q822.8,279.3 825.5,282.3" fill="none" stroke="#333333" stroke-width="0.9"/>
<path d="M830.6,275.3 L827.6,278.3 L830.6,281.3" fill="none" stroke="#333333" stroke-width="0.9"/>
<text x="820.8" y="275.20" text-anchor="end" font-size="7" fill="#333333" >A2</text>
<text x="794" y="274.80" text-anchor="middle" font-size="7" fill="#333333" >BRN</text>
<path d="M825.5,297 Q822.8,300 822.8,301 Q822.8,302 825.5,305" fill="none" stroke="#333333" stroke-width="0.9"/>
<path d="M830.6,298 L827.6,301 L830.6,304" fill="none" stroke="#333333" stroke-width="0.9"/>
<text x="820.8" y="297.90" text-anchor="end" font-size="7" fill="#333333" >C1</text>
<text x="794" y="297.50" text-anchor="middle" font-size="7" fill="#333333" >ORG</text>
<path d="M825.5,332.2 Q822.8,335.2 822.8,336.2 Q822.8,337.2 825.5,340.2" fill="none" stroke="#333333" stroke-width="0.9"/>
<path d="M830.6,333.2 L827.6,336.2 L830.6,339.2" fill="none" stroke="#333333" stroke-width="0.9"/>
<text x="820.8" y="333.10" text-anchor="end" font-size="7" fill="#333333" >C2</text>
<text x="794" y="332.70" text-anchor="middle" font-size="7" fill="#333333" >WHT</text>
<path d="M825.5,355.8 Q822.8,358.8 822.8,359.8 Q822.8,360.8 825.5,363.8" fill="none" stroke="#333333" stroke-width="0.9"/>
<path d="M830.6,356.8 L827.6,359.8 L830.6,362.8" fill="none" stroke="#333333" stroke-width="0.9"/>
<text x="820.8" y="356.70" text-anchor="end" font-size="7" fill="#333333" >A1</text>
<text x="794" y="356.30" text-anchor="middle" font-size="7" fill="#333333" >BLK</text>
<polyline points="827.6,278.3 868.7,278.3 868.7,312.8 855.4,312.8" fill="none" stroke="#333333" stroke-width="1.1" stroke-linejoin="miter"/>
<circle cx="855.4" cy="312.8" r="1.4" fill="#222"/>
<polyline points="827.6,301 835.4,301" fill="none" stroke="#333333" stroke-width="1.1" stroke-linejoin="miter"/>
<line x1="835.4" y1="301" x2="855.1" y2="289.9" stroke="#333333" stroke-width="0.9"/>
<path d="M853.01,291.08 L849.15,295.43 L847.28,292.12 Z" fill="#222"/>
<circle cx="835.4" cy="301" r="1.4" fill="#222"/>
<circle cx="855.1" cy="289.9" r="1.4" fill="#222"/>
<line x1="845.2" y1="296.4" x2="845.2" y2="335.9" stroke="#333333" stroke-width="1.3" stroke-dasharray="4.5 2.6"/>
<polyline points="827.6,336.2 832.3,336.2" fill="none" stroke="#333333" stroke-width="1.1" stroke-linejoin="miter"/>
<circle cx="832.3" cy="336.2" r="1.4" fill="#222"/>
<path d="M832.3,336.2 q3.85,-5 7.7,0 q3.85,-5 7.7,0 q3.85,-5 7.7,0 L868.7,336.2 L868.7,359.8" fill="none" stroke="#333333" stroke-width="1.1"/>
<path d="M832.3,336.2 L832.3,348 L837,348 l1.5,-2.5 l3,5 l3,-5 l3,5 l3,-5 l3,5 l1.4,-2.5 L868.7,348" fill="none" stroke="#333333" stroke-width="1.1"/>
<circle cx="868.7" cy="348" r="1.4" fill="#222"/>
<polyline points="827.6,359.8 868.7,359.8" fill="none" stroke="#333333" stroke-width="1.1" stroke-linejoin="miter"/>
<text x="876.6" y="378.80" text-anchor="end" font-size="7" fill="#333333" >ROOF BEACON RELAY</text>
<text x="876.6" y="387.70" text-anchor="end" font-size="7" fill="#333333" >(AT LOWER LEFT</text>
<text x="876.6" y="396.00" text-anchor="end" font-size="7" fill="#333333" >"B" PILLAR</text>
<polyline points="72,465.2 880.3,465.2" fill="none" stroke="#00f814" stroke-width="1.5" stroke-linejoin="miter"/>
<polyline points="72,477 880.3,477" fill="none" stroke="#248a28" stroke-width="1.7" stroke-linejoin="miter"/>
<polyline points="72,488.7 880.3,488.7" fill="none" stroke="#d4d4d4" stroke-width="1.5" stroke-linejoin="miter"/>
<polyline points="72,559.2 880.3,559.2" fill="none" stroke="#ff1f2a" stroke-width="1.7" stroke-linejoin="miter"/>
<polyline points="72,570.7 880.3,570.7" fill="none" stroke="#ffff14" stroke-width="1.7" stroke-linejoin="miter"/>
<polyline points="72,582.3 880.3,582.3" fill="none" stroke="#0b7a0b" stroke-width="1.6" stroke-linejoin="miter"/>
<polyline points="72,617.5 880.3,617.5" fill="none" stroke="#12f5f5" stroke-width="1.7" stroke-linejoin="miter"/>
<polyline points="72,629.3 880.3,629.3" fill="none" stroke="#12f5f5" stroke-width="1.7" stroke-linejoin="miter"/>
<polyline points="72,641 880.3,641" fill="none" stroke="#1c3488" stroke-width="1.7" stroke-linejoin="miter"/>
<polyline points="72,699.5 880.3,699.5" fill="none" stroke="#1c3488" stroke-width="1.7" stroke-linejoin="miter"/>
<polyline points="72,722.8 880.3,722.8" fill="none" stroke="#1c3488" stroke-width="1.7" stroke-linejoin="miter"/>
<polyline points="342,605.8 880.3,605.8" fill="none" stroke="#12f5f5" stroke-width="1.7" stroke-linejoin="miter"/>
<polyline points="271.3,676 880.3,676" fill="none" stroke="#12f5f5" stroke-width="1.7" stroke-linejoin="miter"/>
<polyline points="494,687.9 880.3,687.9" fill="none" stroke="#1c3488" stroke-width="1.7" stroke-linejoin="miter"/>
<polyline points="83.5,758 83.5,735 271.3,735 271.3,676" fill="none" stroke="#12f5f5" stroke-width="1.7" stroke-linejoin="miter"/>
<polyline points="342,605.8 342,758" fill="none" stroke="#12f5f5" stroke-width="1.7" stroke-linejoin="miter"/>
<polyline points="494,687.9 494,758" fill="none" stroke="#1c3488" stroke-width="1.7" stroke-linejoin="miter"/>
<text x="62.5" y="468.10" text-anchor="middle" font-size="7" fill="#333333" >2</text>
<text x="70.5" y="461.70" text-anchor="start" font-size="7" fill="#333333" >LT GRN</text>
<text x="62.5" y="479.90" text-anchor="middle" font-size="7" fill="#333333" >3</text>
<text x="70.5" y="473.50" text-anchor="start" font-size="7" fill="#333333" >DK GRN</text>
<text x="62.5" y="491.60" text-anchor="middle" font-size="7" fill="#333333" >4</text>
<text x="70.5" y="485.20" text-anchor="start" font-size="7" fill="#333333" >WHT</text>
<text x="62.5" y="514.90" text-anchor="middle" font-size="7" fill="#333333" >5</text>
<text x="70.5" y="508.50" text-anchor="start" font-size="7" fill="#333333" >WHT</text>
<text x="62.5" y="562.10" text-anchor="middle" font-size="7" fill="#333333" >6</text>
<text x="70.5" y="555.70" text-anchor="start" font-size="7" fill="#333333" >RED</text>
<text x="62.5" y="573.60" text-anchor="middle" font-size="7" fill="#333333" >7</text>
<text x="70.5" y="567.20" text-anchor="start" font-size="7" fill="#333333" >YEL</text>
<text x="62.5" y="585.20" text-anchor="middle" font-size="7" fill="#333333" >8</text>
<text x="70.5" y="578.80" text-anchor="start" font-size="7" fill="#333333" >DK GRN</text>
<text x="62.5" y="620.40" text-anchor="middle" font-size="7" fill="#333333" >9</text>
<text x="70.5" y="614.00" text-anchor="start" font-size="7" fill="#333333" >LT BLU</text>
<text x="62.5" y="632.20" text-anchor="middle" font-size="7" fill="#333333" >10</text>
<text x="70.5" y="625.80" text-anchor="start" font-size="7" fill="#333333" >LT BLU</text>
<text x="62.5" y="643.90" text-anchor="middle" font-size="7" fill="#333333" >11</text>
<text x="70.5" y="637.50" text-anchor="start" font-size="7" fill="#333333" >DK BLU</text>
<text x="62.5" y="702.40" text-anchor="middle" font-size="7" fill="#333333" >12</text>
<text x="70.5" y="696.00" text-anchor="start" font-size="7" fill="#333333" >DK BLU</text>
<text x="62.5" y="725.70" text-anchor="middle" font-size="7" fill="#333333" >13</text>
<text x="70.5" y="719.30" text-anchor="start" font-size="7" fill="#333333" >DK BLU</text>
<text x="880.3" y="451.00" text-anchor="end" font-size="7" fill="#333333" >WHT</text>
<text x="890" y="456.80" text-anchor="middle" font-size="7" fill="#333333" >1</text>
<text x="880.3" y="462.90" text-anchor="end" font-size="7" fill="#333333" >LT GRN</text>
<text x="890" y="468.70" text-anchor="middle" font-size="7" fill="#333333" >2</text>
<text x="880.3" y="474.70" text-anchor="end" font-size="7" fill="#333333" >DK GRN</text>
<text x="890" y="480.50" text-anchor="middle" font-size="7" fill="#333333" >3</text>
<text x="880.3" y="486.40" text-anchor="end" font-size="7" fill="#333333" >WHT</text>
<text x="890" y="492.20" text-anchor="middle" font-size="7" fill="#333333" >4</text>
<text x="880.3" y="498.00" text-anchor="end" font-size="7" fill="#333333" >BRN</text>
<text x="890" y="503.80" text-anchor="middle" font-size="7" fill="#333333" >5</text>
<text x="880.3" y="556.90" text-anchor="end" font-size="7" fill="#333333" >RED</text>
<text x="890" y="562.70" text-anchor="middle" font-size="7" fill="#333333" >6</text>
<text x="880.3" y="568.40" text-anchor="end" font-size="7" fill="#333333" >YEL</text>
<text x="890" y="574.20" text-anchor="middle" font-size="7" fill="#333333" >7</text>
<text x="880.3" y="580.00" text-anchor="end" font-size="7" fill="#333333" >DK GRN</text>
<text x="890" y="585.80" text-anchor="middle" font-size="7" fill="#333333" >8</text>
<text x="880.3" y="603.50" text-anchor="end" font-size="7" fill="#333333" >LT BLU</text>
<text x="890" y="609.30" text-anchor="middle" font-size="7" fill="#333333" >9</text>
<text x="880.3" y="615.20" text-anchor="end" font-size="7" fill="#333333" >LT BLU</text>
<text x="890" y="621.00" text-anchor="middle" font-size="7" fill="#333333" >10</text>
<text x="880.3" y="627.00" text-anchor="end" font-size="7" fill="#333333" >LT BLU</text>
<text x="890" y="632.80" text-anchor="middle" font-size="7" fill="#333333" >11</text>
<text x="880.3" y="638.70" text-anchor="end" font-size="7" fill="#333333" >DK BLU</text>
<text x="890" y="644.50" text-anchor="middle" font-size="7" fill="#333333" >12</text>
<text x="880.3" y="673.70" text-anchor="end" font-size="7" fill="#333333" >LT BLU</text>
<text x="890" y="679.50" text-anchor="middle" font-size="7" fill="#333333" >13</text>
<text x="880.3" y="685.60" text-anchor="end" font-size="7" fill="#333333" >DK BLU</text>
<text x="890" y="691.40" text-anchor="middle" font-size="7" fill="#333333" >14</text>
<text x="880.3" y="697.20" text-anchor="end" font-size="7" fill="#333333" >DK BLU</text>
<text x="890" y="703.00" text-anchor="middle" font-size="7" fill="#333333" >15</text>
<text x="880.3" y="720.50" text-anchor="end" font-size="7" fill="#333333" >DK BLU</text>
<text x="890" y="726.30" text-anchor="middle" font-size="7" fill="#333333" >16</text>
<text x="81.5" y="739.20" text-anchor="end" font-size="7" fill="#333333" >LT</text>
<text x="81.5" y="747.70" text-anchor="end" font-size="7" fill="#333333" >BLU</text>
<text x="326.6" y="742.60" text-anchor="middle" font-size="7" fill="#333333" >LT BLU</text>
<text x="478" y="742.80" text-anchor="middle" font-size="7" fill="#333333" >DK BLU</text>
<text x="542.4" y="742.80" text-anchor="middle" font-size="7" fill="#333333" >BRN</text>
<text x="592.1" y="742.80" text-anchor="middle" font-size="7" fill="#333333" >BRN/WHT</text>
<text x="77.5" y="757.00" text-anchor="middle" font-size="7" fill="#333333" >A</text>
<text x="89.0" y="756.10" text-anchor="start" font-size="7" fill="#333333" >C1</text>
<line x1="89.0" y1="757.00" x2="97.40" y2="757.00" stroke="#555" stroke-width="0.6"/>
<path d="M79.7,760.1 Q83.5,756.5 87.3,760.1" fill="none" stroke="#333333" stroke-width="0.9"/>
<text x="336.2" y="757.00" text-anchor="middle" font-size="7" fill="#333333" >B</text>
<text x="347.5" y="756.10" text-anchor="start" font-size="7" fill="#333333" >C1</text>
<line x1="347.5" y1="757.00" x2="355.90" y2="757.00" stroke="#555" stroke-width="0.6"/>
<path d="M338.2,760.1 Q342,756.5 345.8,760.1" fill="none" stroke="#333333" stroke-width="0.9"/>
<text x="488.3" y="757.00" text-anchor="middle" font-size="7" fill="#333333" >H</text>
<text x="499.5" y="756.10" text-anchor="start" font-size="7" fill="#333333" >C1</text>
<line x1="499.5" y1="757.00" x2="507.90" y2="757.00" stroke="#555" stroke-width="0.6"/>
<path d="M490.2,760.1 Q494,756.5 497.8,760.1" fill="none" stroke="#333333" stroke-width="0.9"/>
<text x="546.5" y="757.00" text-anchor="middle" font-size="7" fill="#333333" >G</text>
<text x="558.2" y="756.10" text-anchor="start" font-size="7" fill="#333333" >C1</text>
<line x1="558.2" y1="757.00" x2="566.60" y2="757.00" stroke="#555" stroke-width="0.6"/>
<path d="M548.9000000000001,760.1 Q552.7,756.5 556.5,760.1" fill="none" stroke="#333333" stroke-width="0.9"/>
<text x="605.1" y="757.00" text-anchor="middle" font-size="7" fill="#333333" >D</text>
<text x="616.4" y="756.10" text-anchor="start" font-size="7" fill="#333333" >C1</text>
<line x1="616.4" y1="757.00" x2="624.80" y2="757.00" stroke="#555" stroke-width="0.6"/>
<path d="M607.1,760.1 Q610.9,756.5 614.6999999999999,760.1" fill="none" stroke="#333333" stroke-width="0.9"/>
<rect x="70.7" y="762.6" width="550.5" height="37.39999999999998" fill="#dcdcfc"/>
<line x1="70.7" y1="762.6" x2="621.2" y2="762.6" stroke="#2a2a33" stroke-width="1.3" stroke-dasharray="7.0 4.092"/>
<line x1="70.7" y1="762.6" x2="70.7" y2="800" stroke="#2a2a33" stroke-width="1.3" stroke-dasharray="7.0 3.133"/>
<line x1="621.2" y1="762.6" x2="621.2" y2="800" stroke="#2a2a33" stroke-width="1.3" stroke-dasharray="7.0 3.133"/>
<line x1="70.7" y1="800" x2="621.2" y2="800" stroke="#2a2a33" stroke-width="1.3" stroke-dasharray="7.0 4.092"/>
<polyline points="83.5,763.5 83.5,790" fill="none" stroke="#333333" stroke-width="1.0" stroke-linejoin="miter"/>
<path d="M80.5,766.8 L83.5,763.8 L86.5,766.8" fill="none" stroke="#333333" stroke-width="0.9"/>
<polyline points="341.5,763.5 341.5,790" fill="none" stroke="#333333" stroke-width="1.0" stroke-linejoin="miter"/>
<path d="M338.5,766.8 L341.5,763.8 L344.5,766.8" fill="none" stroke="#333333" stroke-width="0.9"/>
<polyline points="493.5,763.5 493.5,790" fill="none" stroke="#333333" stroke-width="1.0" stroke-linejoin="miter"/>
<path d="M490.5,766.8 L493.5,763.8 L496.5,766.8" fill="none" stroke="#333333" stroke-width="0.9"/>
<polyline points="552.5,763.5 552.5,790" fill="none" stroke="#333333" stroke-width="1.0" stroke-linejoin="miter"/>
<path d="M549.5,766.8 L552.5,763.8 L555.5,766.8" fill="none" stroke="#333333" stroke-width="0.9"/>
<polyline points="610.5,763.5 610.5,790" fill="none" stroke="#333333" stroke-width="1.0" stroke-linejoin="miter"/>
<path d="M607.5,766.8 L610.5,763.8 L613.5,766.8" fill="none" stroke="#333333" stroke-width="0.9"/>
<polyline points="154.5,790 154.5,775.5 552.5,775.5" fill="none" stroke="#333333" stroke-width="1.0" stroke-linejoin="miter"/>
<circle cx="552.5" cy="775.5" r="1.5" fill="#222"/>
<text x="624.6" y="766.40" text-anchor="start" font-size="7" fill="#333333" >REAR</text>
<text x="624.6" y="775.00" text-anchor="start" font-size="7" fill="#333333" >LAMPS</text>
<text x="624.6" y="783.50" text-anchor="start" font-size="7" fill="#333333" >JUNCTION</text>
<text x="702.20" y="785" text-anchor="middle" font-size="7" fill="#333333" transform="rotate(-90 702.20 785)">BRN</text>
<text x="783.50" y="785" text-anchor="middle" font-size="7" fill="#333333" transform="rotate(-90 783.50 785)">BRN</text>
<polyline points="786.8,790 786.8,758 845.4,758 845.4,790" fill="none" stroke="#8b6508" stroke-width="1.3" stroke-linejoin="miter"/>
<rect x="0" y="782" width="938" height="9" fill="#fff"/>
</svg></body></html>
